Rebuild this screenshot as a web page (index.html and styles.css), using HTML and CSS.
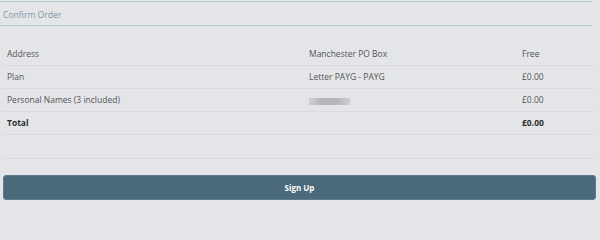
FILE: index.html
```html
<!DOCTYPE html>
<html>
<head>
<meta charset="utf-8">
<link rel="stylesheet" href="styles.css">
</head>
<body>
<div class="page">
  <div class="heading">Confirm Order</div>
  <table class="order">
    <colgroup>
      <col class="c1"><col class="c2"><col class="c3">
    </colgroup>
    <tbody>
      <tr><td>Address</td><td>Manchester PO Box</td><td>Free</td></tr>
      <tr><td>Plan</td><td>Letter PAYG - PAYG</td><td>£0.00</td></tr>
      <tr><td>Personal Names (3 included)</td><td><span class="blur"></span></td><td>£0.00</td></tr>
    </tbody>
    <tbody class="totals">
      <tr class="total"><td>Total</td><td></td><td>£0.00</td></tr>
      <tr class="empty"><td></td><td></td><td></td></tr>
    </tbody>
  </table>
  <button class="signup">Sign Up</button>
</div>
</body>
</html>
```
FILE: styles.css
```css
html, body {
  margin: 0;
  padding: 0;
  background: #e4e5e9;
}
body {
  width: 600px;
  height: 204px;
  overflow: hidden;
  font-family: "Open Sans", "Liberation Sans", sans-serif;
  color: #555;
}
.page {
  padding-top: 1px;
}
.heading {
  width: 592px;
  height: 25px;
  border-top: 1px solid #b5cbd7;
  border-bottom: 1px solid #b5cbd7;
  padding: 0 0 0 3px;
  box-sizing: border-box;
  line-height: 26px;
  font-size: 8.6px;
  color: #7f97a6;
}
.order {
  margin: 16px 0 0 3px;
  width: 590px;
  border-collapse: collapse;
  table-layout: fixed;
  font-size: 8.5px;
  color: #555;
}
.c1 { width: 302px; }
.c2 { width: 213px; }
.c3 { width: 75px; }
.order td {
  height: 23px;
  padding: 0 4px;
  border-bottom: 1px solid #d9dadf;
  box-sizing: border-box;
  vertical-align: middle;
  white-space: nowrap;
}
.totals {
  border-top: 1px solid #c7c8cd;
}
.total td {
  font-weight: bold;
  color: #2e2e2e;
}
.empty td {
  height: 24px;
}
.blur {
  display: inline-block;
  width: 41px;
  height: 7px;
  margin-top: 2px;
  background: linear-gradient(90deg, #d0d0d3, #b5b5b8 30%, #b8b8bb 70%, #cfcfd2);
  filter: blur(0.6px);
  vertical-align: middle;
}
.signup {
  display: block;
  margin: 16px 0 0 3px;
  width: 593px;
  height: 25px;
  border: 1px solid #5d7b8b;
  border-radius: 3px;
  background: #4a6a7c;
  color: #fff;
  font-family: "Open Sans", "Liberation Sans", sans-serif;
  font-weight: bold;
  font-size: 8px;
  padding: 0;
}
```
